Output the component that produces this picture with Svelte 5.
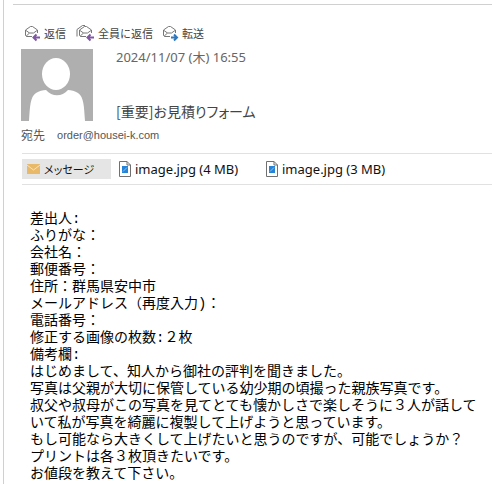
<script lang="ts">
  const actions = [
    { id: 'reply', label: '返信' },
    { id: 'replyAll', label: '全員に返信' },
    { id: 'forward', label: '転送' }
  ];

  const attachments = [
    { name: 'image.jpg', size: '4 MB' },
    { name: 'image.jpg', size: '3 MB' }
  ];

  const lines = [
    '差出人:',
    'ふりがな：',
    '会社名：',
    '郵便番号：',
    '住所：群馬県安中市',
    'メールアドレス（再度入力)：',
    '電話番号：',
    '修正する画像の枚数:２枚',
    '備考欄:',
    'はじめまして、知人から御社の評判を聞きました。',
    '写真は父親が大切に保管している幼少期の頃撮った親族写真です。',
    '叔父や叔母がこの写真を見てとても懐かしさで楽しそうに３人が話して',
    'いて私が写真を綺麗に複製して上げようと思っています。',
    'もし可能なら大きくして上げたいと思うのですが、可能でしょうか？',
    'プリントは各３枚頂きたいです。',
    'お値段を教えて下さい。'
  ];
</script>

<main class="mail">
  <div class="top-line"></div>

  <div class="actions">
    {#each actions as action}
      <button class="action" type="button">
        <svg class:wide={action.id === 'replyAll'} viewBox={action.id === 'replyAll' ? '-3 0 18 16' : '0 0 15 16'} fill="none" aria-hidden="true">
          {#if action.id === 'replyAll'}
            <path d="M-2 11.500V4.500L3.500 .5H6" stroke="#777" />
          {/if}
          <path d="M7 11.500H1.500L.5 10.500V5L5.500 1.500H7.500L12.500 5V8" stroke="#777" />
          <path d="M1 5.500L4.500 8H8.500L12 5.500M4.500 8L1 11.300" stroke="#777" />
          {#if action.id === 'forward'}
            <path d="M8 12.500H13.500M11 9.500L14 12.500L11 15.500" stroke="#2f78bd" stroke-width="2" />
          {:else}
            <path d="M15 12.500H9M11.500 9.500L8.500 12.500L11.500 15.500" stroke="#8056a5" stroke-width="2" />
          {/if}
        </svg>
        {action.label}
      </button>
    {/each}
  </div>

  <header class="summary">
    <svg class="avatar" viewBox="0 0 72 72" aria-hidden="true">
      <rect width="72" height="72" fill="#afafaf" />
      <path d="M8 72C9 58 9 48 15 44C18 42 22 41 25 41C31 48 41 48 47 41C50 41 54 42 57 44C63 48 63 58 64 72Z" fill="#fff" />
      <ellipse cx="35" cy="25" rx="14" ry="16" fill="#fff" />
    </svg>
    <div class="heading">
      <time datetime="2024-11-07T16:55">2024/11/07 (木) 16:55</time>
      <h1>[重要]お見積りフォーム</h1>
    </div>
  </header>

  <div class="recipient">
    <span class="to-label">宛先</span>
    <span class="address">order@housei-k.com</span>
  </div>

  <div class="tabs">
    <button class="message-tab" type="button">
      <svg viewBox="0 0 13 10" aria-hidden="true">
        <rect width="13" height="10" fill="#e9b96a" />
        <path d="M0 1L6.500 6L13 1" fill="none" stroke="#f7e3c0" stroke-width="1" />
      </svg>
      メッセージ
    </button>
    {#each attachments as file}
      <button class="attachment" type="button">
        <svg viewBox="0 0 12 16" aria-hidden="true">
          <path d="M.5 .5H8L11.500 4V15.500H.5Z" fill="#fff" stroke="#707070" />
          <path d="M8 .5V4H11.500" fill="none" stroke="#707070" />
          <rect x="3" y="5" width="6" height="7" fill="#2584d8" />
          <path d="M4 10.500L8 6.500" stroke="#8fc3ef" />
        </svg>
        {file.name} ({file.size})
      </button>
    {/each}
  </div>

  <article class="body">
    {#each lines as line}
      <p>{line}</p>
    {/each}
  </article>
</main>

<style>
  :global(body) {
    background: #fff;
  }

  .mail {
    margin-left: 3px;
    border-left: 1px solid #d0d0d0;
    color: #444;
    font-family: "Noto Sans", "Noto Sans CJK JP", sans-serif;
  }

  .top-line {
    height: 4px;
    margin-left: 9px;
    border-bottom: 1px solid #d0d0d0;
  }

  button {
    display: flex;
    align-items: center;
    margin: 0;
    padding: 0;
    border: none;
    background: none;
    color: inherit;
    font-family: inherit;
    white-space: nowrap;
    cursor: pointer;
  }

  .actions {
    display: flex;
    gap: 10px;
    padding: 19px 0 0 21px;
  }

  .action {
    gap: 4px;
    height: 18px;
    font-family: "Noto Sans CJK JP", sans-serif;
    font-size: 11px;
    line-height: 18px;
  }

  .action svg {
    width: 15px;
    height: 16px;
    overflow: visible;
  }

  .action svg.wide {
    width: 18px;
  }

  .summary {
    display: flex;
    gap: 23px;
    padding: 7px 0 0 17px;
  }

  .avatar {
    flex: none;
    width: 72px;
    height: 72px;
  }

  .heading {
    display: flex;
    flex-direction: column;
    justify-content: space-between;
  }

  time {
    color: #666;
    font-size: 13px;
    line-height: 16px;
  }

  h1 {
    margin: 0;
    font-family: "Noto Sans CJK JP", sans-serif;
    font-size: 14px;
    font-weight: 400;
    line-height: 20px;
    font-feature-settings: "palt";
  }

  .recipient {
    display: flex;
    align-items: center;
    gap: 12px;
    height: 28px;
    padding-left: 17px;
    color: #555;
    font-size: 12px;
  }

  .address {
    font-family: "Liberation Sans", sans-serif;
    font-size: 11px;
  }

  .tabs {
    display: flex;
    align-items: center;
    margin: 4px 0 0 18px;
    padding: 5px 0;
    border-top: 1px solid #e1e1e1;
    border-bottom: 1px solid #e1e1e1;
    color: #111;
  }

  .message-tab {
    gap: 4px;
    width: 89px;
    height: 20px;
    padding-left: 5px;
    background: #e5e5e5;
    font-family: "Noto Sans CJK JP", sans-serif;
    font-size: 11px;
    font-feature-settings: "palt";
  }

  .message-tab svg {
    width: 13px;
    height: 10px;
  }

  .attachment {
    gap: 4px;
    width: 147px;
    height: 20px;
    font-size: 13px;
  }

  .message-tab + .attachment {
    margin-left: 8px;
  }

  .attachment svg {
    width: 12px;
    height: 16px;
  }

  .body {
    padding: 26px 0 2px 26px;
    color: #000;
    font-family: "Liberation Mono", "Noto Sans CJK JP", monospace;
    font-size: 14px;
    line-height: 17px;
  }

  .body p {
    margin: 0;
  }
</style>
